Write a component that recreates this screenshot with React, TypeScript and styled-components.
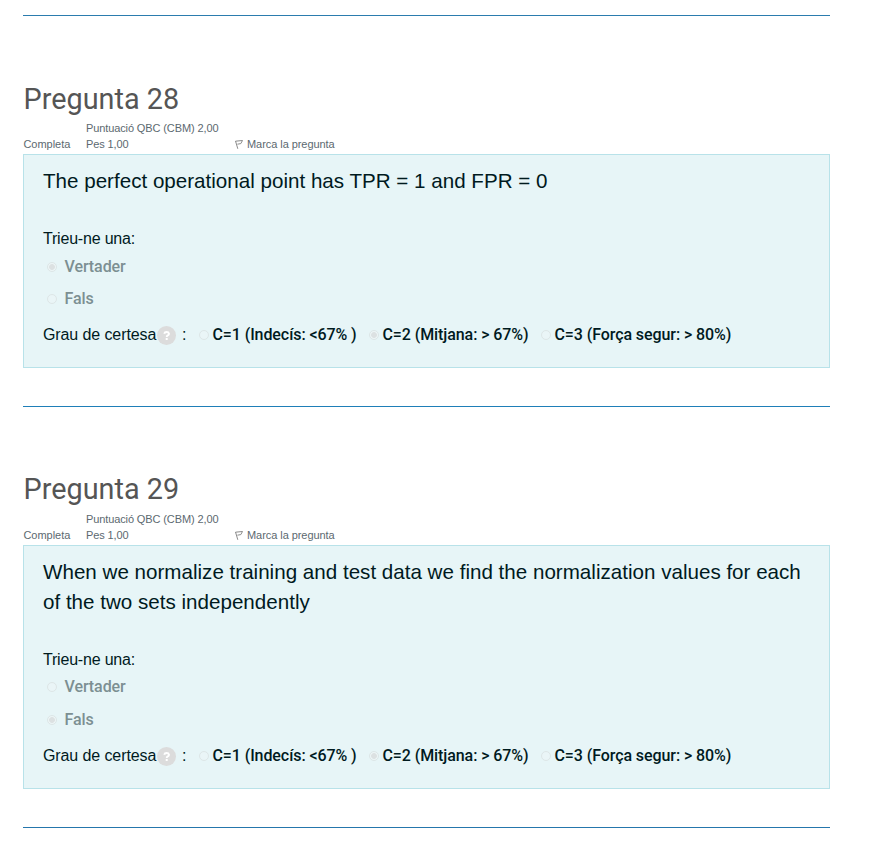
import React from "react";
import styled, { createGlobalStyle } from "styled-components";

const GlobalStyle = createGlobalStyle`
  * { box-sizing: border-box; }
  body {
    margin: 0;
    background: #fff;
    color: #001a1e;
    font-family: "Liberation Sans", Arial, sans-serif;
    font-size: 16px;
  }
`;

const Page = styled.main`
  width: 807px;
  margin-left: 23px;
  padding-top: 15px;
  height: 841px;
  overflow: hidden;
`;

const Rule = styled.hr<{ $color: string }>`
  height: 1px;
  margin: 0;
  border: 0;
  background: ${(p) => p.$color};
`;

const Question = styled.section`
  padding: 65px 0 38px;
`;

const Title = styled.h3<{ $leading: number }>`
  margin: 0;
  height: 39px;
  line-height: ${(p) => p.$leading}px;
  padding-left: 0.6px;
  font-family: Roboto, sans-serif;
  font-size: 28.8px;
  font-weight: 400;
  color: #555;
`;

const Meta = styled.div`
  display: grid;
  grid-template-columns: 62.6px 149px auto;
  align-items: end;
  height: 34px;
  padding: 0 0 2px 0.4px;
  font-size: 11px;
  line-height: 16px;
  letter-spacing: -0.02px;
  color: #5c6970;
`;

const Grade = styled.span`
  letter-spacing: -0.11px;
`;

const FlagLink = styled.span`
  display: flex;
  align-items: center;
  gap: 4px;
  letter-spacing: -0.06px;
`;

const Panel = styled.div<{ $height: number }>`
  height: ${(p) => p.$height}px;
  padding: 11px 19px 0;
  border: 1px solid #b8e2e9;
  background: #e7f5f7;
`;

const Prompt = styled.p`
  margin: 0 0 35px;
  font-size: 20.6px;
  line-height: 30px;
  white-space: pre;
`;

const Lead = styled.div<{ $height: number }>`
  height: ${(p) => p.$height}px;
  line-height: 16px;
  letter-spacing: -0.2px;
`;

const Answers = styled.div<{ $step: number; $height: number }>`
  display: grid;
  grid-auto-rows: ${(p) => p.$step}px;
  height: ${(p) => p.$height}px;
`;

const Answer = styled.label`
  display: flex;
  align-items: flex-start;
  gap: 7.5px;
  padding-left: 4px;
  font: 500 16px/20px Roboto, sans-serif;
  letter-spacing: -0.08px;
  color: #7c8f92;
`;

const Radio = styled.span<{ $checked?: boolean }>`
  flex: none;
  width: 10px;
  height: 10px;
  margin-top: 5px;
  border: 1px solid #dde6e7;
  border-radius: 50%;
  background: ${(p) =>
    p.$checked ? "radial-gradient(circle, #dce1e2 0 2.5px, #edf6f7 3.3px)" : "#eaf5f7"};
`;

const Certainty = styled.div`
  display: grid;
  grid-template-columns: 114px 25px 17px 170px 172px auto;
  height: 20px;
  line-height: 20px;
  letter-spacing: -0.1px;
  white-space: nowrap;
`;

const Help = styled.span`
  display: flex;
  width: 19px;
  height: 19px;
  margin-top: 1px;
`;

const Level = styled.label`
  display: flex;
  gap: 3.5px;
  font: 500 16px/20px Roboto, sans-serif;
  letter-spacing: -0.08px;
`;

function FlagIcon() {
  return (
    <svg width="8" height="10" viewBox="0 0 8 10" fill="none" stroke="#8b8b8b">
      <path d="M.5 2 2.8 9.8M.5 2.2 7.5 1.5 5.8 4.6 2.4 5.2" />
    </svg>
  );
}

function HelpIcon() {
  return (
    <svg width="19" height="19" viewBox="0 0 19 19" fill="none">
      <circle cx="9.5" cy="9.5" r="9.5" fill="#dcdcdc" />
      <path d="M7.2 7.7Q7.6 6 9.6 6T12 7.7Q12 8.8 10.8 9.4 9.7 10 9.7 11" stroke="#fff" strokeWidth="1.9" />
      <path d="M8.7 12h2v2h-2z" fill="#fff" />
    </svg>
  );
}

type Item = {
  number: number;
  prompt: string;
  selected: string;
  height: number;
  step: number;
  titleLeading: number;
  leadHeight: number;
};

const items: Item[] = [
  {
    number: 28,
    prompt: "The perfect operational point has TPR = 1 and FPR = 0",
    selected: "Vertader",
    height: 214,
    step: 32,
    titleLeading: 36,
    leadHeight: 26,
  },
  {
    number: 29,
    prompt:
      "When we normalize training and test data we find the normalization values for each\nof the two sets independently",
    selected: "Fals",
    height: 244,
    step: 33,
    titleLeading: 34,
    leadHeight: 25,
  },
];

const levels = ["C=1 (Indecís: <67% )", "C=2 (Mitjana: > 67%)", "C=3 (Força segur: > 80%)"];

function QuestionBlock({ item }: { item: Item }) {
  return (
    <Question>
      <Title $leading={item.titleLeading}>Pregunta {item.number}</Title>
      <Meta>
        <span>Completa</span>
        <Grade>
          Puntuació QBC (CBM) 2,00
          <br />
          Pes 1,00
        </Grade>
        <FlagLink>
          <FlagIcon />
          Marca la pregunta
        </FlagLink>
      </Meta>
      <Panel $height={item.height}>
        <Prompt>{item.prompt}</Prompt>
        <Lead $height={item.leadHeight}>Trieu-ne una:</Lead>
        <Answers $step={item.step} $height={94 - item.leadHeight}>
          {["Vertader", "Fals"].map((a) => (
            <Answer key={a}>
              <Radio $checked={a === item.selected} />
              {a}
            </Answer>
          ))}
        </Answers>
        <Certainty>
          <span>Grau de certesa</span>
          <Help>
            <HelpIcon />
          </Help>
          <span>:</span>
          {levels.map((l, i) => (
            <Level key={l}>
              <Radio $checked={i === 1} />
              {l}
            </Level>
          ))}
        </Certainty>
      </Panel>
    </Question>
  );
}

export default function App() {
  return (
    <>
      <GlobalStyle />
      <Page>
        <Rule $color="#2b7cae" />
        <QuestionBlock item={items[0]} />
        <Rule $color="#1f7fb8" />
        <QuestionBlock item={items[1]} />
        <Rule $color="#2576ac" />
      </Page>
    </>
  );
}
